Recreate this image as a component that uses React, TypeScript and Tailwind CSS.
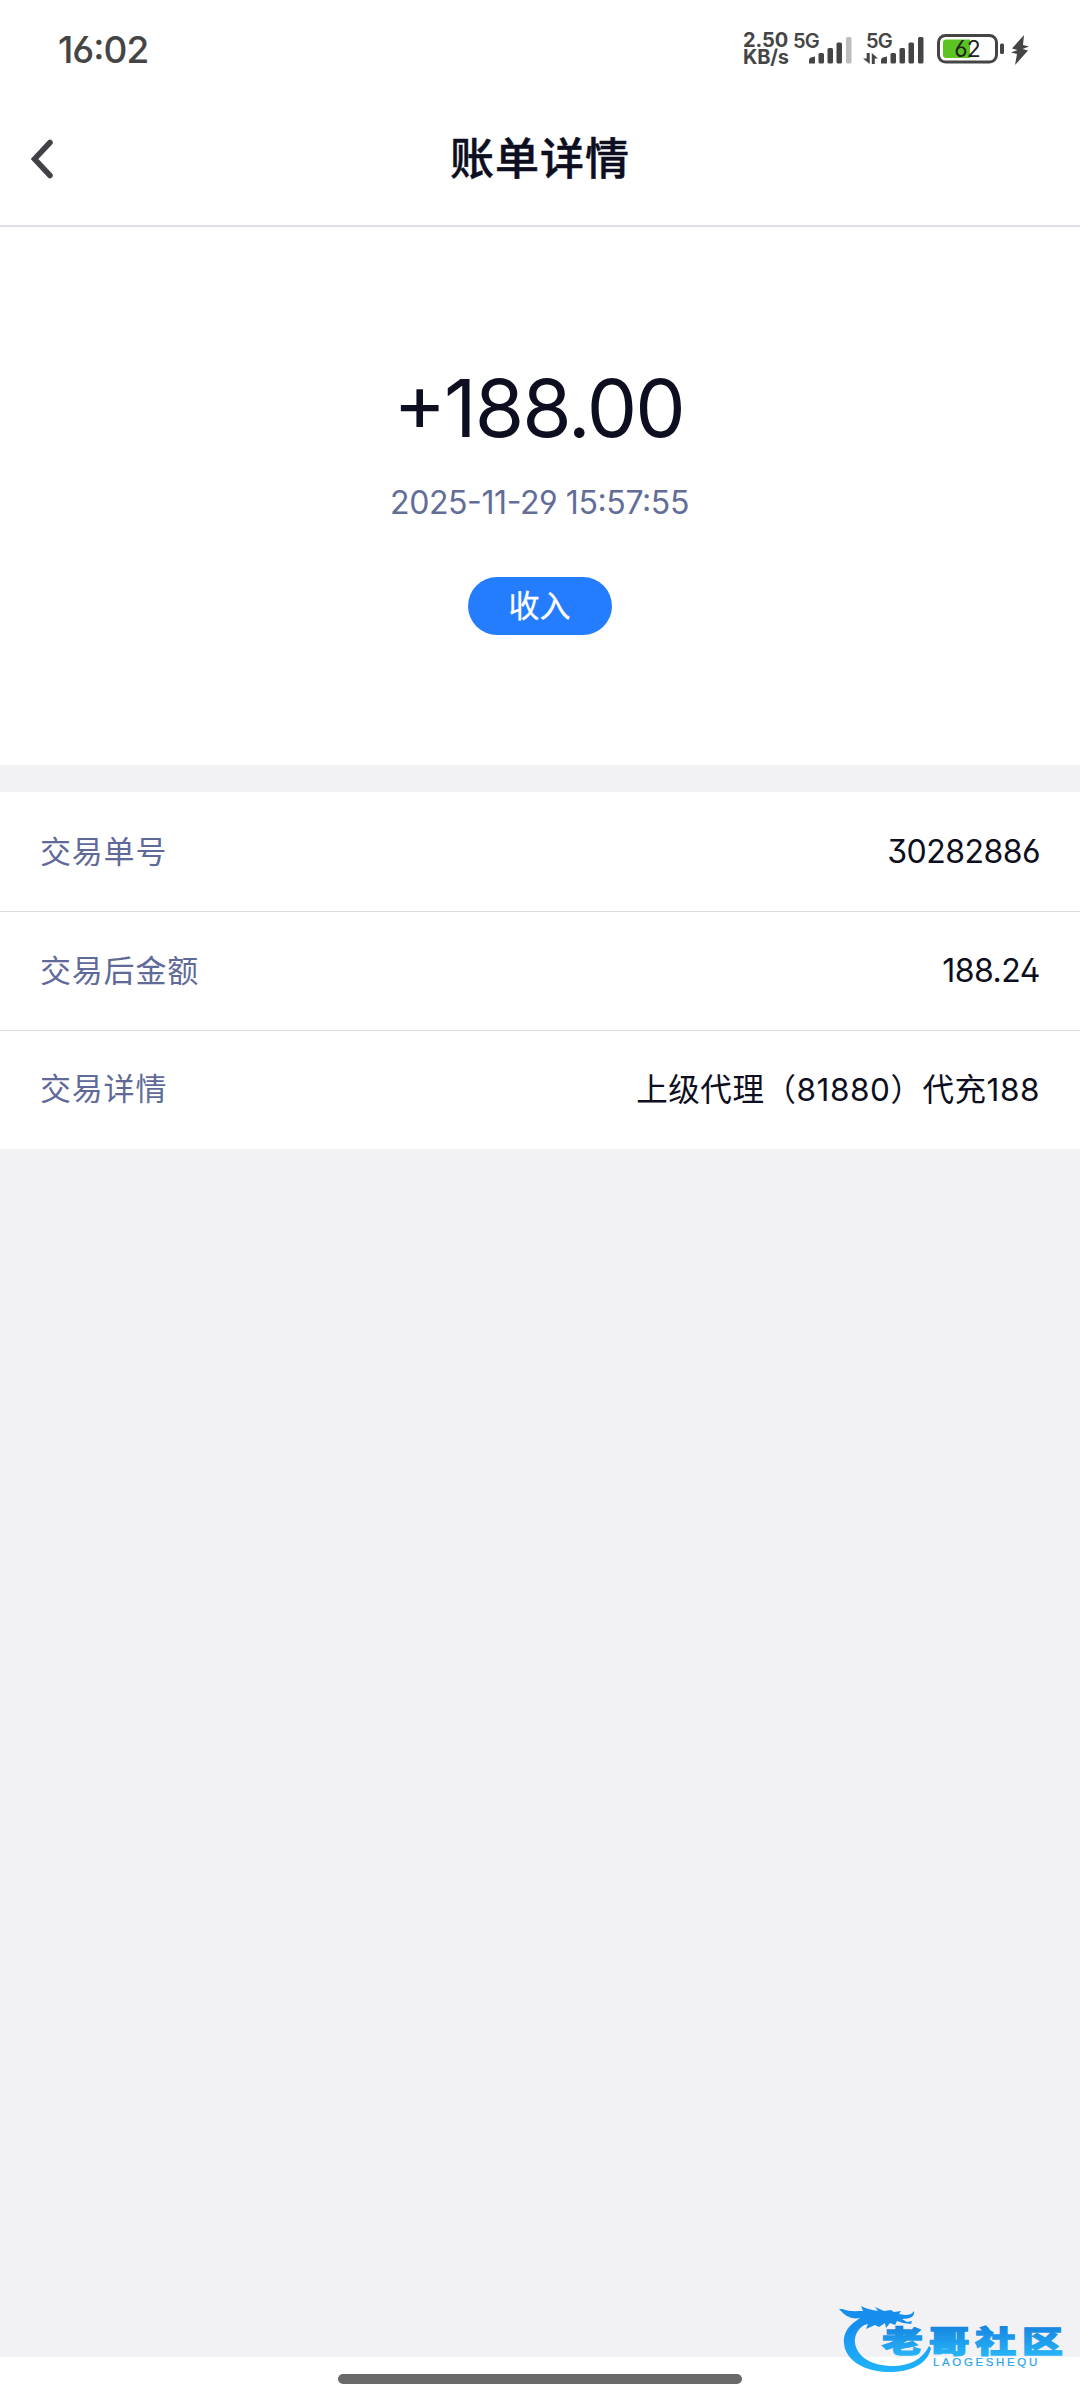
type DetailRow = {
  label: string;
  value: string;
  valueClass: string;
};

const rows: DetailRow[] = [
  { label: "交易单号", value: "30282886", valueClass: "text-[32px] tracking-[-0.55px]" },
  { label: "交易后金额", value: "188.24", valueClass: "text-[32px] tracking-[-0.5px]" },
  { label: "交易详情", value: "上级代理（81880）代充188", valueClass: "text-[31.5px] tracking-[0.55px]" },
];

function SignalBars({ weak = false }: { weak?: boolean }) {
  return (
    <svg className="h-[28px] w-[44px]" viewBox="0 0 44 28" fill="#454545">
      <path d="M0 27.5v-3.5q0-2 2-2.500l4-1v7z" />
      <rect x="9.500" y="17" width="5.500" height="10.500" rx="1.500" />
      <rect x="18.500" y="12" width="5.500" height="15.500" rx="1.500" />
      <rect x="27.500" y="6.500" width="5.500" height="21" rx="1.500" />
      <rect x="37" y="1" width="5.500" height="26.500" rx="1.500" fill={weak ? "#bdbdbd" : "#454545"} />
    </svg>
  );
}

function StatusBar() {
  return (
    <div className="relative h-[100px] text-[#454545]">
      <div className="flex h-full items-center pl-[58px] text-[37px] font-medium tracking-[-1px]">16:02</div>
      <div className="absolute top-[32px] left-[743px] text-[20px] leading-[17px] font-bold">
        <div className="tracking-[-0.1px]">2.50</div>
        <div className="tracking-[-0.2px]">KB/s</div>
      </div>
      <div className="absolute top-[32px] left-[793px] text-[20px] leading-[18px] font-semibold tracking-[-0.8px]">5G</div>
      <div className="absolute top-[36px] left-[809px]">
        <SignalBars weak />
      </div>
      <div className="absolute top-[32px] left-[866px] text-[20px] leading-[18px] font-semibold tracking-[-0.8px]">5G</div>
      <div className="absolute top-[36px] left-[881px]">
        <SignalBars />
      </div>
      {/* data transfer arrows */}
      <svg className="absolute top-[53px] left-[863px] h-[11px] w-[15px]" viewBox="0 0 15 11" fill="#454545">
        <path d="M3.700 0h3v11L0 5.500h3.700zM8.800 11h3V5.500H15L8.800 0z" />
      </svg>
      {/* battery */}
      <svg className="absolute top-[34px] left-[937px] h-[30px] w-[68px]" viewBox="0 0 68 30">
        <rect x="1.500" y="1.500" width="58" height="26.500" rx="7" fill="#fff" stroke="#454545" strokeWidth="3" />
        <path d="M9 5.500h24v18.500H9q-3 0-3-3v-12.500q0-3 3-3z" fill="#5bc422" />
        <rect x="63" y="9.500" width="4" height="10.500" rx="1.500" fill="#454545" />
      </svg>
      <div className="absolute top-[37px] left-[937px] w-[60px] text-center text-[23px] leading-[25px] tracking-[-1px] text-[#222]">62</div>
      <svg className="absolute top-[35px] left-[1011px] h-[30px] w-[18px]" viewBox="0 0 18 30" fill="#454545">
        <path d="M13 0 1 13.500 6.500 15 0 17.500 6 19 4 30 17 15.500 11.500 14 18 11.500 12 10z" />
      </svg>
    </div>
  );
}

function Watermark() {
  return (
    <svg className="absolute top-[2298px] left-[836px] h-[80px] w-[236px]" viewBox="0 0 236 80">
      <defs>
        <linearGradient id="ring" x1="0" y1="0" x2="0" y2="1">
          <stop offset="0" stopColor="#1488ee" />
          <stop offset="1" stopColor="#20b4fa" />
        </linearGradient>
        <linearGradient id="name" x1="0" y1="0" x2="0" y2="1">
          <stop offset="0.2" stopColor="#1683df" />
          <stop offset="0.9" stopColor="#27b4f7" />
        </linearGradient>
      </defs>
      <path
        d="M38 17C18 20 7 31 8 45c1 18 22 30 49 29 20-1 35-9 38-24l-2-2c-7 14-20 20-36 20-21 0-36-9-38-23-1-13 9-21 26-24z"
        fill="url(#ring)"
      />
      <path
        d="M6 11c8 3 14 2 21 2l-2-5c6 3 11 4 17 5l-3-4 9 4 7-1 3 2 7-1-2 3 6 1c4 0 7-1 9-4 1 5-3 8-12 8l5 3 5-1-1 3-8-1-6-2-2 4-5-2-4 5-1-5-6 4-4-2-9 4 2-5c-9 2-14 5-18 9 1-7 4-11 10-15-9 2-16-3-21-9z"
        fill="#168eed"
      />
      <text
        transform="translate(46 53.500) scale(1.36 1)"
        fontSize="30"
        fontWeight="900"
        letterSpacing="4.300"
        fill="url(#name)"
        stroke="url(#name)"
        strokeWidth="1.300"
        className="font-['Noto_Sans_CJK_SC',sans-serif]"
      >
        老哥社区
      </text>
      <text
        transform="translate(97 68) scale(1.15 1)"
        fontSize="10"
        letterSpacing="2.300"
        fill="#2ba5ee"
        stroke="#2ba5ee"
        strokeWidth="0.200"
        className="font-['Liberation_Sans',sans-serif]"
      >
        LAOGESHEQU
      </text>
    </svg>
  );
}

export default function App() {
  return (
    <div className="relative flex h-[2400px] w-[1080px] flex-col overflow-hidden bg-[#f2f2f4] font-[Inter,'Noto_Sans_CJK_SC',sans-serif] text-[#0d0e20] [font-feature-settings:'case','ss01','cv04']">
      <header className="h-[227px] border-b-2 border-[#dedfea] bg-white">
        <StatusBar />
        <div className="relative flex h-[116px] items-center justify-center pt-[2px]">
          <svg className="absolute top-[38px] left-[30px] h-[42px] w-[25px]" viewBox="0 0 25 42" fill="none" stroke="#414248" strokeWidth="5.500">
            <path d="M20 4.500 4.500 21 20 37.500" strokeLinecap="round" />
          </svg>
          <h1 className="text-[44px] font-medium tracking-[1px] [-webkit-text-stroke:0.5px]">账单详情</h1>
        </div>
      </header>

      <section className="flex h-[538px] flex-col items-center bg-white pt-[132px]">
        <div className="pr-[3px] text-[80px] leading-[98px] tracking-[-2px]">+188.00</div>
        <div className="mt-[26px] pr-[1px] text-[32px] leading-[40px] tracking-[-0.4px] text-[#626d98]">2025-11-29 15:57:55</div>
        <div className="mt-[54px] flex h-[58px] w-[144px] items-center justify-center rounded-full bg-[#247cff] pr-[1px] text-[31px] text-white [-webkit-text-stroke:0.3px]">
          收入
        </div>
      </section>

      <section className="mt-[27px] bg-white pt-[1.5px]">
        {rows.map((row) => (
          <div
            key={row.label}
            className="flex h-[118.5px] items-center justify-between border-b border-[#dcdcdf] px-[40px] last:border-b-0 last:pb-[1px]"
          >
            <span className="text-[31px] tracking-[0.8px] text-[#5f6a98]">{row.label}</span>
            <span className={row.valueClass}>{row.value}</span>
          </div>
        ))}
      </section>

      <footer className="mt-auto flex h-[43px] justify-center bg-white pt-[17px]">
        <div className="h-[10px] w-[404px] rounded-full bg-[#696969]" />
      </footer>
      <Watermark />
    </div>
  );
}
